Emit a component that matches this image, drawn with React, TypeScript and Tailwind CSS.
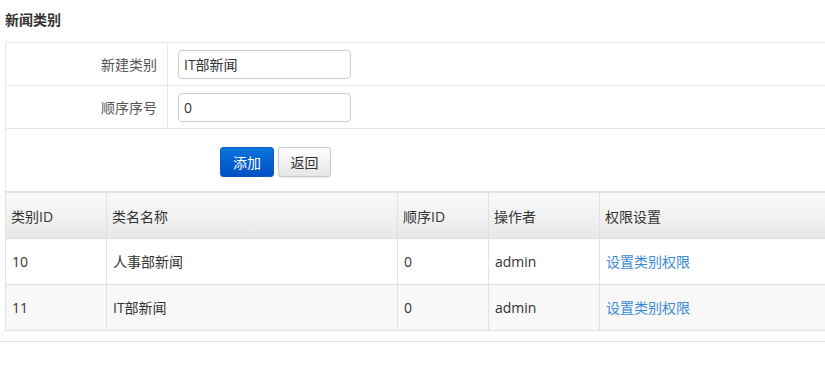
import React from 'react';

const rows = [
  { id: '10', name: '人事部新闻', order: '0', op: 'admin' },
  { id: '11', name: 'IT部新闻', order: '0', op: 'admin' },
];

const cols = 'grid grid-cols-[101px_291px_91px_111px_1fr]';

export default function App() {
  return (
    <div
      className="w-full h-[366px] overflow-hidden bg-white text-[14px] text-[#333]"
      style={{ fontFamily: '"Open Sans", "Noto Sans CJK SC", sans-serif' }}
    >
      <h2 className="pl-[5px] pt-[9px] h-[42px] text-[14px] font-bold text-[#333]">新闻类别</h2>

      {/* 表单 */}
      <div className="ml-[5px] border-l border-t border-[#e8e8e8]">
        <div className="flex h-[43px] border-b border-[#e8e8e8]">
          <div className="w-[162px] shrink-0 border-r border-[#e8e8e8] flex items-center justify-end pr-[10px] text-[#555]">
            新建类别
          </div>
          <div className="flex items-center pl-[10px]">
            <input
              defaultValue="IT部新闻"
              className="w-[173px] h-[29px] border border-[#ccc] rounded-[4px] px-[5px] text-[14px] text-[#333] outline-none"
            />
          </div>
        </div>
        <div className="flex h-[43px] border-b border-[#e8e8e8]">
          <div className="w-[162px] shrink-0 border-r border-[#e8e8e8] flex items-center justify-end pr-[10px] text-[#555]">
            顺序序号
          </div>
          <div className="flex items-center pl-[10px]">
            <input
              defaultValue="0"
              className="w-[173px] h-[29px] border border-[#ccc] rounded-[4px] px-[5px] text-[14px] text-[#333] outline-none"
            />
          </div>
        </div>
        <div className="flex items-start h-[62px] pl-[214px] pt-[18px] gap-[4px]">
          <button className="w-[54px] h-[30px] rounded-[3px] border border-[#0a5bc4] bg-gradient-to-b from-[#0c73dc] to-[#0051c6] text-white text-[14px]">
            添加
          </button>
          <button className="w-[53px] h-[30px] rounded-[3px] border border-[#c8c8c8] bg-gradient-to-b from-white to-[#e6e6e6] text-[#333] text-[14px] shadow-[0_1px_1px_rgba(0,0,0,0.08)]">
            返回
          </button>
        </div>
      </div>

      {/* 列表 */}
      <div className="ml-[5px] border-l border-b border-t-2 border-[#e2e2e2]">
        <div className={`${cols} h-[46px] bg-gradient-to-b from-[#f9f9f9] via-[#f2f2f2] to-[#e8e8e8] border-b border-[#dcdcdc]`}>
          {['类别ID', '类名名称', '顺序ID', '操作者', '权限设置'].map((h, i) => (
            <div
              key={h}
              className={`flex items-center pl-[5px] pt-[2px] text-[#333] ${i < 4 ? 'border-r border-[#e0e0e0]' : ''}`}
            >
              {h}
            </div>
          ))}
        </div>
        {rows.map((r, idx) => (
          <div
            key={r.id}
            className={`${cols} ${idx === 0 ? 'h-[46px] bg-white border-b border-[#dedede]' : 'h-[45px] bg-[#f8f8f8]'}`}
          >
            <div className="flex items-center pl-[6px] border-r border-[#e0e0e0]">{r.id}</div>
            <div className="flex items-center pl-[6px] border-r border-[#e0e0e0]">{r.name}</div>
            <div className="flex items-center pl-[6px] border-r border-[#e0e0e0]">{r.order}</div>
            <div className="flex items-center pl-[6px] border-r border-[#e0e0e0]">{r.op}</div>
            <div className="flex items-center pl-[6px]">
              <a className="text-[#3a8ad6] cursor-pointer">设置类别权限</a>
            </div>
          </div>
        ))}
      </div>

      <div className="mt-[10px] border-t border-[#e5e5e5]" />
    </div>
  );
}
